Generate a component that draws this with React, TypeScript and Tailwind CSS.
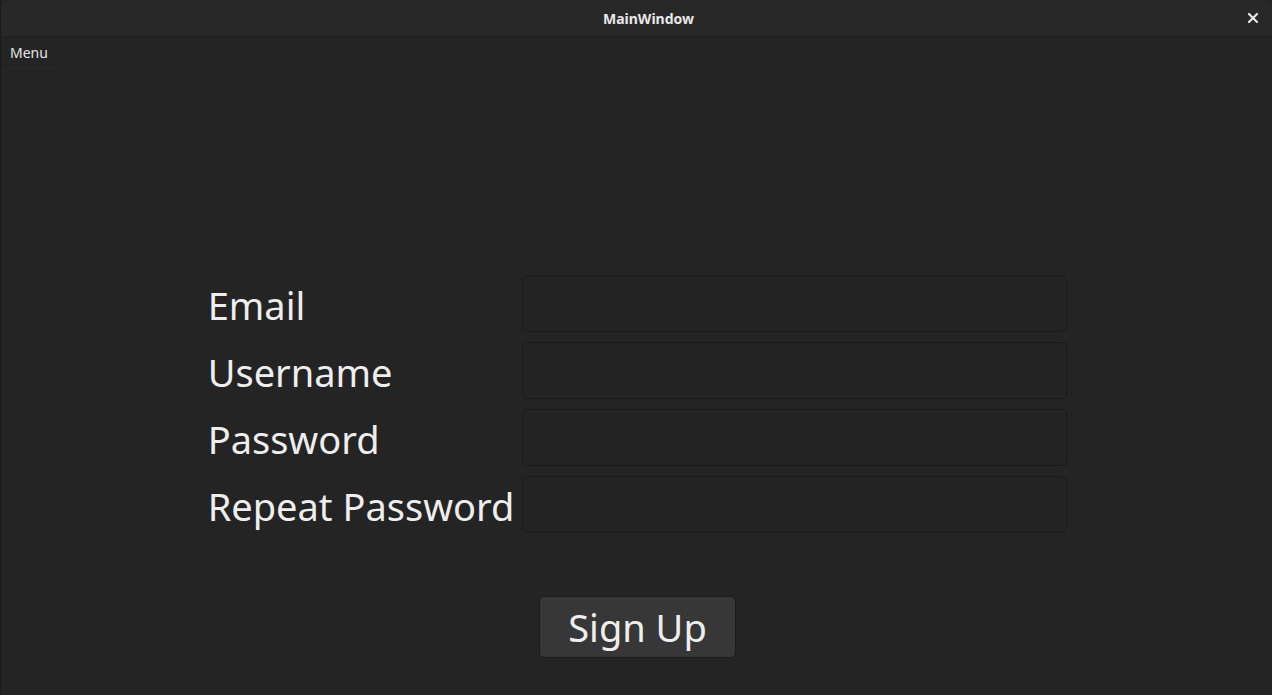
import React from 'react';

const fields = ['Email', 'Username', 'Password', 'Repeat Password'];

export default function App() {
  return (
    <div
      className="w-[1272px] h-[695px] flex flex-col bg-[#242424] text-[#ececec] border-l border-[#1b1b1b] overflow-hidden"
      style={{ fontFamily: '"Noto Sans", "Open Sans", sans-serif' }}
    >
      {/* title bar */}
      <div className="h-[37px] shrink-0 flex items-center justify-center relative bg-[#282828] border-b border-[#1f1f1f] rounded-tl-[8px] rounded-tr-[8px] pl-[24px]">
        <span className="text-[14px] font-bold text-[#e8e8e8] pt-[1px]">MainWindow</span>
        <button className="absolute right-[11px] top-[10px] w-[16px] h-[16px] flex items-center justify-center">
          <svg width="10" height="10" viewBox="0 0 10 10">
            <path d="M1 1 L9 9 M9 1 L1 9" stroke="#eeeeee" strokeWidth="2" strokeLinecap="square" />
          </svg>
        </button>
      </div>

      {/* menu bar */}
      <div className="h-[29px] shrink-0 flex items-start">
        <div className="px-[9px] pt-[7px] h-full border-b border-[#1f1f1f] text-[14px] leading-[17px] text-[#e4e4e4]">Menu</div>
      </div>

      {/* form */}
      <div className="flex-1 flex flex-col items-center pt-[209px]">
        <div className="grid grid-cols-[auto_545px] gap-x-[8px] gap-y-[10px] ml-[2px]">
          {fields.map(f => (
            <React.Fragment key={f}>
              <label className="text-[38px] leading-[57px] text-[#eeeeee] whitespace-nowrap translate-y-[2px]">{f}</label>
              <input
                type={f.includes('Password') ? 'password' : 'text'}
                className="h-[57px] bg-[#232323] border border-[#1b1b1b] rounded-[5px] outline-none px-3 text-[#eeeeee]"
              />
            </React.Fragment>
          ))}
        </div>
        <button className="mt-[63px] w-[197px] h-[62px] bg-[#373737] border border-[#1c1c1c] rounded-[5px] text-[38px] leading-[58px] text-[#eeeeee] ml-[2px]">
          Sign Up
        </button>
      </div>
    </div>
  );
}
